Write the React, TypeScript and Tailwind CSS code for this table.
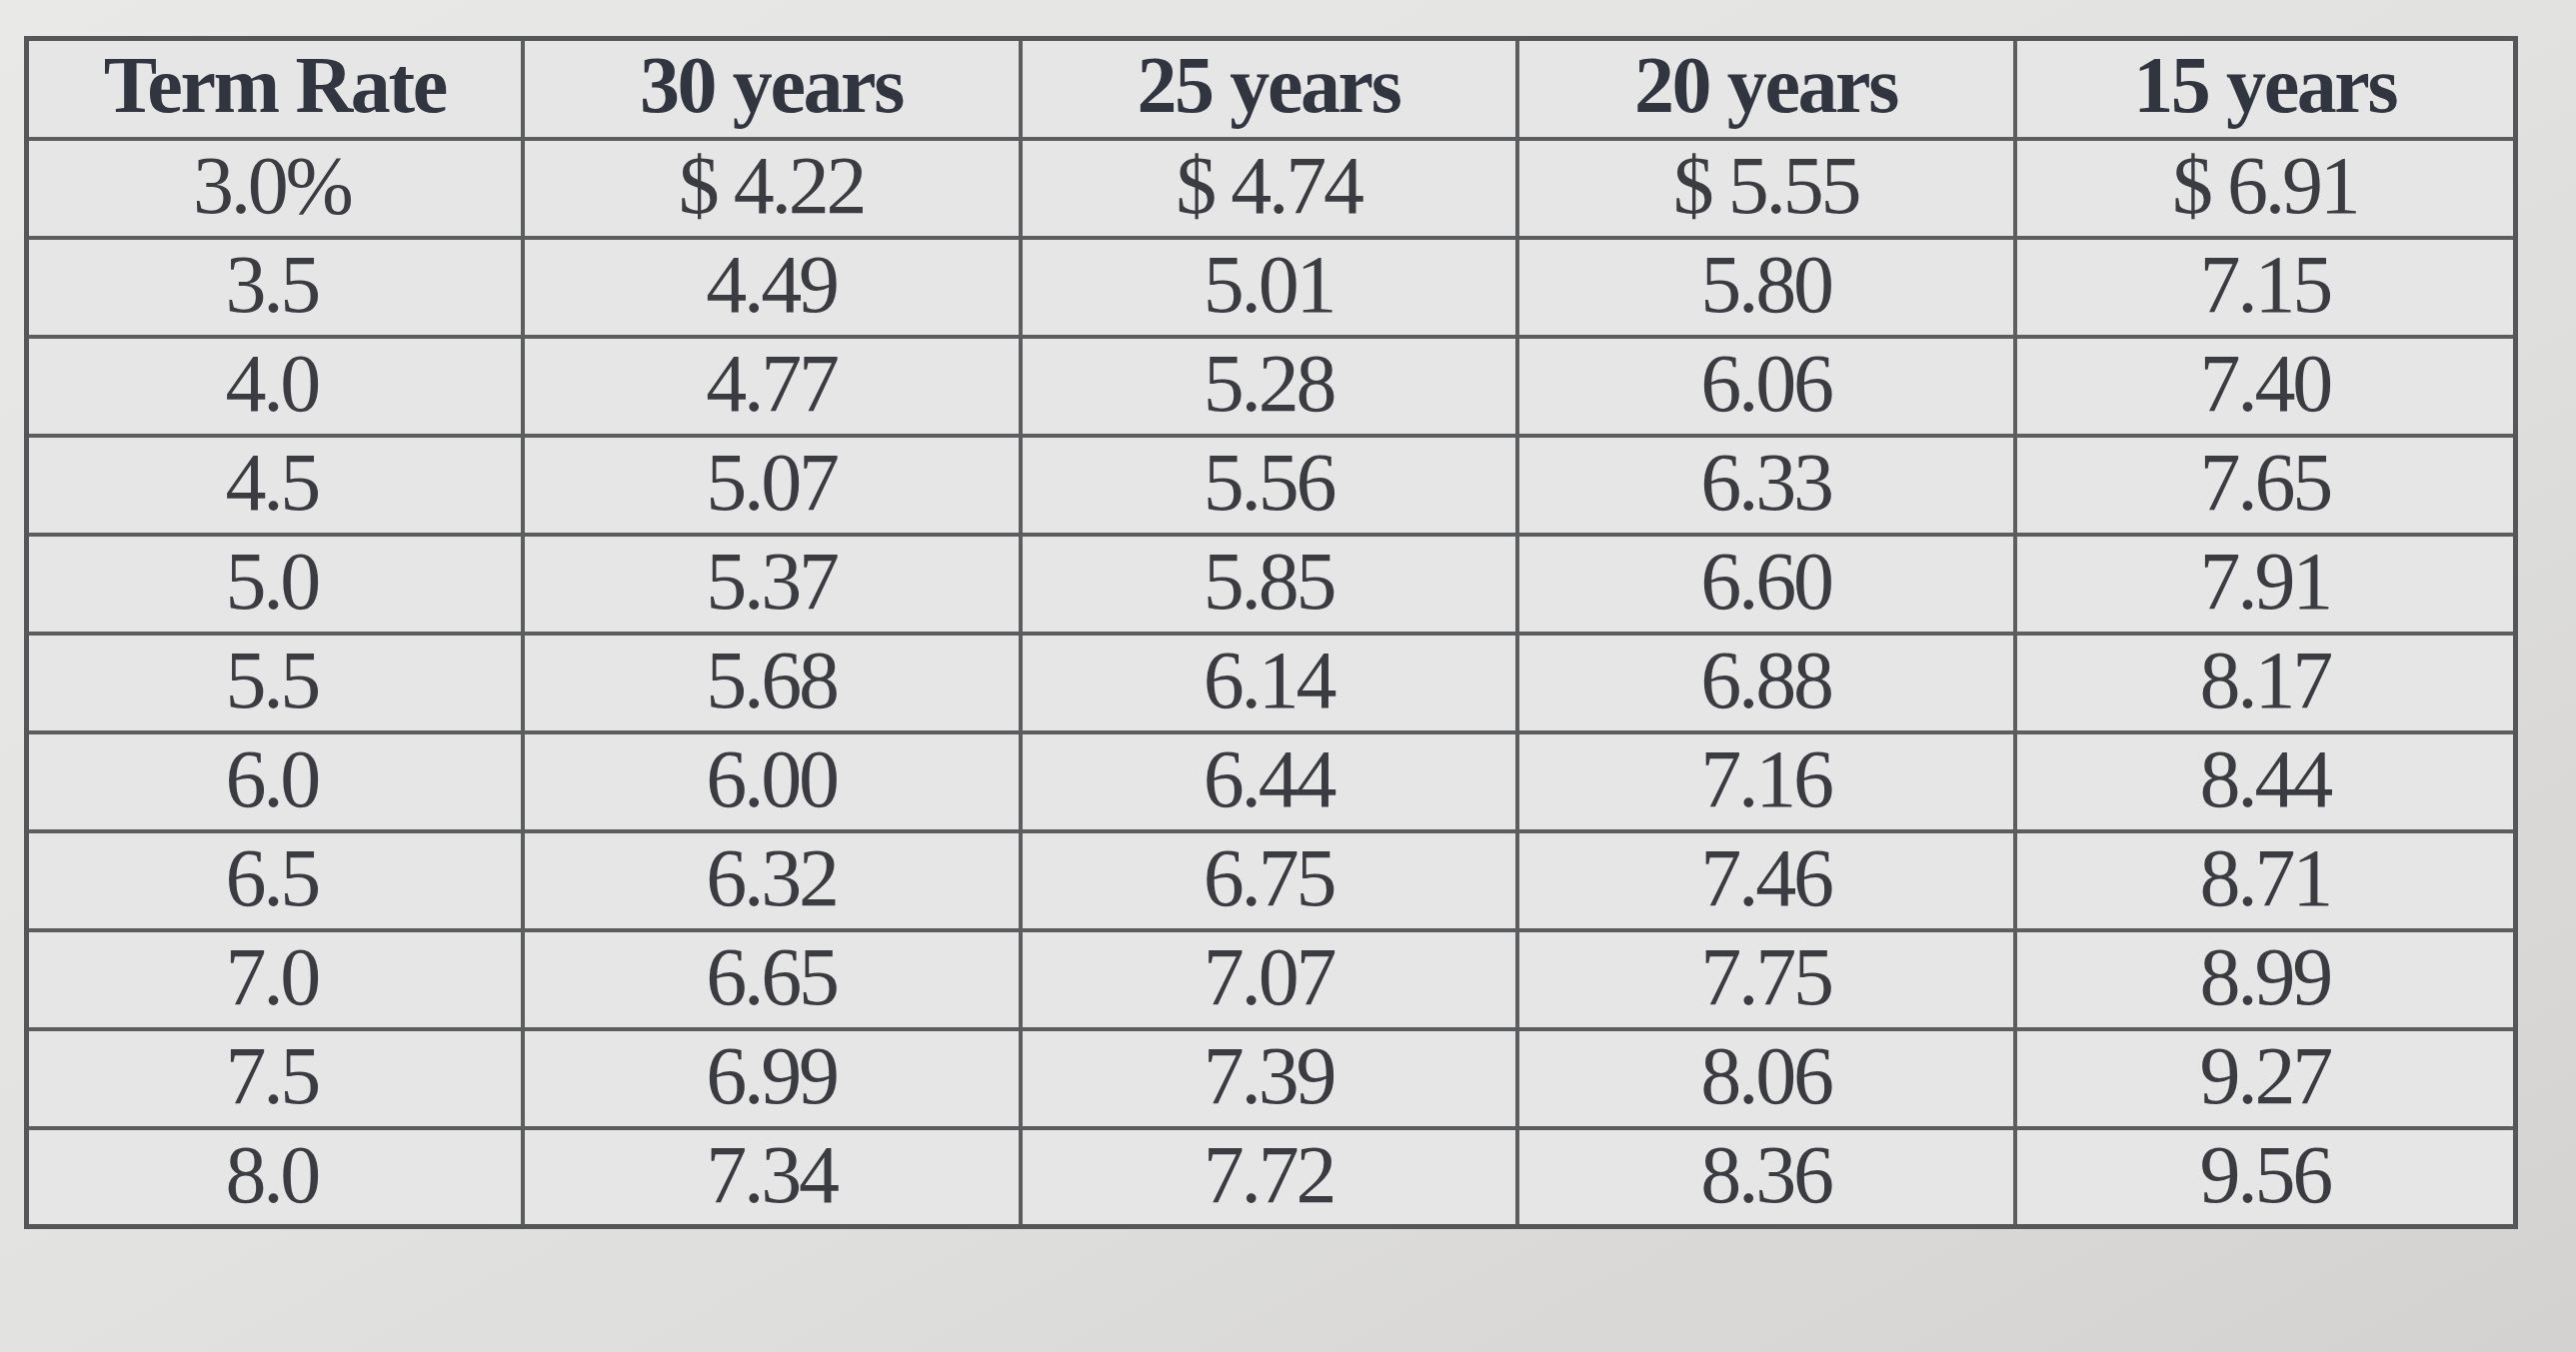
import React from "react";

const headers = ["Term Rate", "30 years", "25 years", "20 years", "15 years"];
const rows: string[][] = [
  ["3.0%", "$ 4.22", "$ 4.74", "$ 5.55", "$ 6.91"],
  ["3.5", "4.49", "5.01", "5.80", "7.15"],
  ["4.0", "4.77", "5.28", "6.06", "7.40"],
  ["4.5", "5.07", "5.56", "6.33", "7.65"],
  ["5.0", "5.37", "5.85", "6.60", "7.91"],
  ["5.5", "5.68", "6.14", "6.88", "8.17"],
  ["6.0", "6.00", "6.44", "7.16", "8.44"],
  ["6.5", "6.32", "6.75", "7.46", "8.71"],
  ["7.0", "6.65", "7.07", "7.75", "8.99"],
  ["7.5", "6.99", "7.39", "8.06", "9.27"],
  ["8.0", "7.34", "7.72", "8.36", "9.56"],
];

const widths = ["w-[496px]", "w-[498px]", "w-[497px]", "w-[498px]", "w-[501px]"];

export default function App() {
  return (
    <div
      className="w-[2577px] h-[1353px] overflow-hidden bg-gradient-to-br from-[#e9e9e8] via-[#e2e2e1] to-[#d3d2d0] pl-[24px] pt-[36px]"
      style={{ fontFamily: '"Liberation Serif", "Times New Roman", serif' }}
    >
      <table className="border-collapse border-[5px] border-[#555657] bg-[#e6e6e6] w-[2490px] table-fixed">
        <thead>
          <tr className="h-[100px]">
            {headers.map((h, i) => (
              <th
                key={h}
                className={`${widths[i]} border-[4px] border-[#5c5d5f] text-center align-middle text-[80px] font-bold leading-none tracking-[-0.03em] text-[#30353f] pb-[8px]`}
              >
                {h}
              </th>
            ))}
          </tr>
        </thead>
        <tbody>
          {rows.map((r, ri) => (
            <tr key={ri} className="h-[99px]">
              {r.map((c, ci) => (
                <td
                  key={ci}
                  className={`border-[4px] border-[#5c5d5f] text-center align-middle text-[82px] leading-none tracking-[-0.04em] text-[#3a3c41] pb-[4px] ${ci === 0 ? "pr-[6px]" : ""}`}
                >
                  {c}
                </td>
              ))}
            </tr>
          ))}
        </tbody>
      </table>
    </div>
  );
}
